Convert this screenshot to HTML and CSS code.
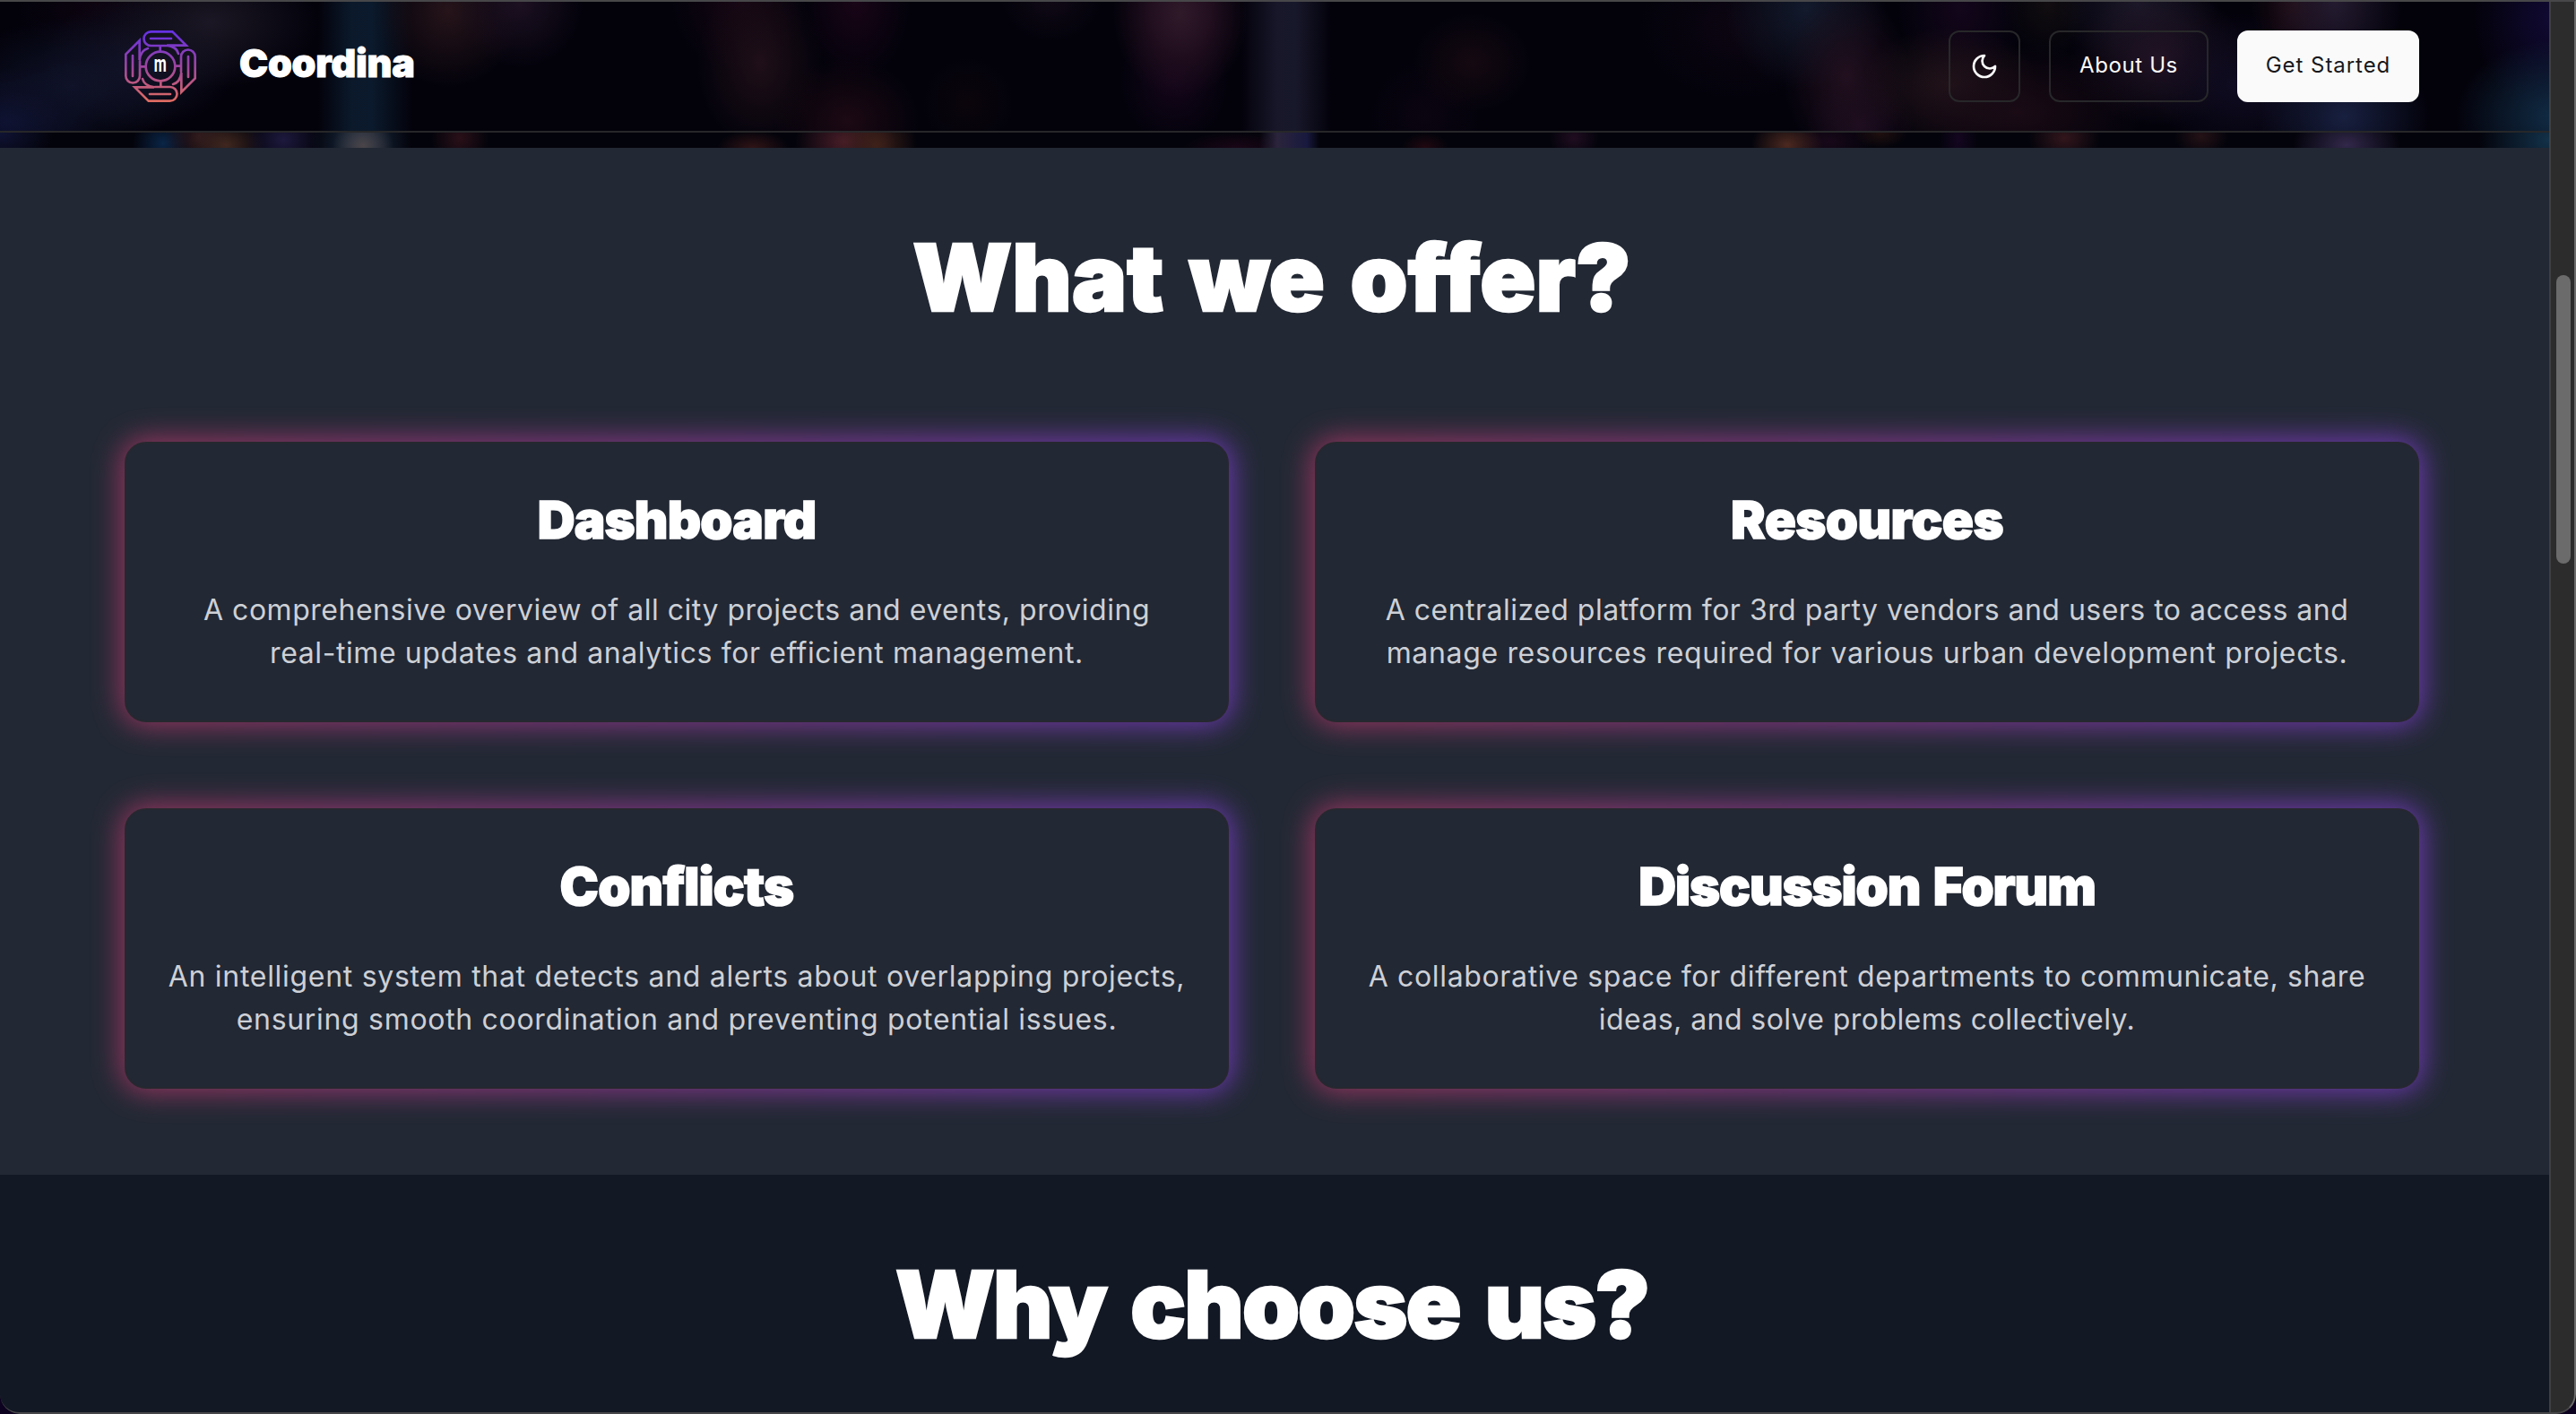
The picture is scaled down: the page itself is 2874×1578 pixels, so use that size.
FILE: index.html
```html
<!DOCTYPE html>
<html lang="en">
<head>
<meta charset="utf-8">
<title>Coordina</title>
<link rel="stylesheet" href="styles.css">
</head>
<body>
<div class="window">
  <div class="page">
    <header class="hero">
      <nav class="nav">
        <a class="brand">
          <svg class="logo" viewBox="0 0 240 240" aria-hidden="true">
            <defs>
              <linearGradient id="ink" x1="0" y1="0" x2="0" y2="1">
                <stop offset="0" stop-color="#6430e6"/>
                <stop offset="0.5" stop-color="#9c459f"/>
                <stop offset="1" stop-color="#e06c60"/>
              </linearGradient>
              <mask id="lines" maskUnits="userSpaceOnUse" x="0" y="0" width="240" height="240">
                <g fill="none" stroke="#fff" stroke-width="8" stroke-linecap="round" stroke-linejoin="miter">
                  <g id="arm">
                    <path d="M119 70V51M138 51H88A23.500 23.500 0 0 1 88 4H160L206 50H141Q174 54 180 78"/>
                    <path d="M87 27H156"/>
                  </g>
                  <use href="#arm" transform="rotate(90 120 120)"/>
                  <use href="#arm" transform="rotate(180 120 120)"/>
                  <use href="#arm" transform="rotate(270 120 120)"/>
                  <circle cx="120" cy="120" r="49"/>
                </g>
              </mask>
            </defs>
            <rect width="240" height="240" fill="url(#ink)" mask="url(#lines)"/>
            <text class="logo-letter" x="98" y="139" textLength="42" lengthAdjust="spacingAndGlyphs">m</text>
          </svg>
          <span class="brand-name">Coordina</span>
        </a>
        <div class="actions">
          <button class="btn btn-icon" aria-label="Toggle theme">
            <svg class="moon" viewBox="0 0 24 24"><path d="M12 3a6 6 0 0 0 9 9 9 9 0 1 1-9-9Z"/></svg>
          </button>
          <button class="btn btn-about">About Us</button>
          <button class="btn btn-start">Get Started</button>
        </div>
      </nav>
      <div class="hero-edge"></div>
    </header>

    <section class="offer">
      <h2 class="heading heading-offer">What we offer?</h2>
      <div class="cards">
        <article class="card">
          <h3 class="card-title">Dashboard</h3>
          <p class="card-text"><span class="line l1">A comprehensive overview of all city projects and events, providing</span> <span class="line l2">real-time updates and analytics for efficient management.</span></p>
        </article>
        <article class="card">
          <h3 class="card-title title-resources">Resources</h3>
          <p class="card-text"><span class="line l3">A centralized platform for 3rd party vendors and users to access and</span> <span class="line l4">manage resources required for various urban development projects.</span></p>
        </article>
        <article class="card">
          <h3 class="card-title">Conflicts</h3>
          <p class="card-text"><span class="line l5">An intelligent system that detects and alerts about overlapping projects,</span> <span class="line l6">ensuring smooth coordination and preventing potential issues.</span></p>
        </article>
        <article class="card">
          <h3 class="card-title title-forum">Discussion Forum</h3>
          <p class="card-text"><span class="line l7">A collaborative space for different departments to communicate, share</span> <span class="line l8">ideas, and solve problems collectively.</span></p>
        </article>
      </div>
    </section>

    <section class="why">
      <h2 class="heading heading-why">Why choose us?</h2>
    </section>
  </div>
  <div class="scrollbar"><div class="thumb"></div></div>
</div>
</body>
</html>
```
FILE: styles.css
```css
* { box-sizing: border-box; }

html, body {
  margin: 0;
  height: 100%;
  overflow: hidden;
  background: #0d0220;
}

body { font-family: Inter, "Liberation Sans", sans-serif; color: #fff; }

.window {
  position: relative;
  display: flex;
  width: 2874px;
  height: 1578px;
  overflow: hidden;
  border-radius: 0 0 22px 22px;
}

/* hairline frame of the window, over the page */
.window::after {
  content: "";
  position: absolute;
  inset: 0;
  border: 2px solid #474749;
  border-left: 0;
  border-right-color: #6c6c6c;
  border-radius: 0 0 22px 22px;
  pointer-events: none;
}

.page {
  flex: none;
  width: 2844px;
  height: 1578px;
  display: flex;
  flex-direction: column;
  overflow: hidden;
}

/* ---------- hero and navigation ---------- */

.hero { flex: none; height: 165px; background: #020109; }

.nav {
  height: 148px;
  padding: 34px 145px 32px 139px;
  display: flex;
  justify-content: space-between;
  align-items: flex-start;
  border-bottom: 2px solid #272729;
  background:
    radial-gradient(110px 85px at 2850px 130px, #112c45, transparent),
    radial-gradient(90px 110px at 2850px 20px, #110a34, transparent),
    radial-gradient(95px 80px at 2615px 130px, #182040, transparent),
    radial-gradient(75px 110px at 2605px 0, #241b30, transparent),
    radial-gradient(50px 70px at 2562px 5px, #220c14, transparent),
    radial-gradient(100px 80px at 2500px 95px, #100c22, transparent),
    radial-gradient(100px 75px at 2410px 65px, #221425, transparent),
    radial-gradient(90px 70px at 2385px 5px, #1b1829, transparent),
    radial-gradient(50px 60px at 2285px 5px, #110d10, transparent),
    radial-gradient(140px 75px at 2250px 125px, #1a0b15, transparent),
    radial-gradient(100px 65px at 2175px 95px, #24151b, transparent),
    radial-gradient(70px 90px at 2188px 10px, #13061b, transparent),
    radial-gradient(70px 95px at 2060px 85px, #22101f, transparent),
    radial-gradient(60px 55px at 2075px 140px, #1c0c1f, transparent),
    radial-gradient(90px 90px at 2015px 10px, #121a2c, transparent),
    radial-gradient(110px 80px at 1940px 30px, #0c0511, transparent),
    radial-gradient(65px 55px at 1642px 70px, #150911, transparent),
    radial-gradient(60px 60px at 1590px 130px, #0b0411, transparent),
    linear-gradient(90deg, transparent 1385px, #18172a 1425px, #18182b 1445px, transparent 1485px),
    radial-gradient(75px 95px at 1317px 15px, #2f1a2a, #210e1e 45%, transparent),
    radial-gradient(60px 70px at 1310px 90px, #14051a, transparent),
    radial-gradient(55px 45px at 1173px 0, #100915, transparent),
    radial-gradient(50px 50px at 1080px 115px, #0b050b, transparent),
    radial-gradient(80px 70px at 945px 135px, #1c0913, transparent),
    radial-gradient(60px 90px at 955px 0, #190517, transparent),
    radial-gradient(70px 95px at 848px 70px, #1f0f18, transparent),
    radial-gradient(75px 80px at 825px 0, #150613, transparent),
    radial-gradient(70px 70px at 580px 5px, #1c1021, transparent),
    radial-gradient(80px 85px at 500px 12px, #26141a, transparent),
    linear-gradient(90deg, transparent 355px, #0b192b 392px, #0b1a2c 415px, transparent 460px),
    radial-gradient(120px 75px at 235px 25px, #1b1724, transparent),
    radial-gradient(110px 75px at 155px 70px, #121327, transparent),
    radial-gradient(130px 75px at 80px 95px, #0f1329, transparent),
    radial-gradient(100px 60px at 10px 135px, #0f1335, transparent),
    radial-gradient(90px 60px at 110px 5px, #0d0410, transparent),
    #03020b;
}

.hero-edge {
  height: 17px;
  background:
    radial-gradient(80px 60px at 2845px 8px, #13324a, transparent),
    radial-gradient(60px 40px at 2618px 14px, #32284a, transparent),
    radial-gradient(30px 24px at 2456px 4px, #241216, transparent),
    radial-gradient(40px 30px at 2303px 6px, #32161c, transparent),
    radial-gradient(22px 40px at 2185px 8px, #140620, transparent),
    radial-gradient(30px 18px at 2098px 0, #20100f, transparent),
    radial-gradient(40px 30px at 1994px 14px, #4c2920, transparent),
    radial-gradient(50px 26px at 2040px 10px, #180819, transparent),
    radial-gradient(28px 24px at 1756px 6px, #200d20, transparent),
    radial-gradient(26px 16px at 1590px 16px, #200810, transparent),
    linear-gradient(90deg, transparent 1405px, #2b243c 1425px, #18193e 1458px, transparent 1472px),
    radial-gradient(60px 18px at 1380px 17px, #1a0616, transparent),
    radial-gradient(45px 44px at 978px 14px, #3e2119, transparent),
    radial-gradient(55px 44px at 942px 10px, #481d28, transparent),
    radial-gradient(40px 20px at 840px 17px, #301416, transparent),
    radial-gradient(32px 34px at 513px 6px, #2a1018, transparent),
    radial-gradient(34px 32px at 405px 15px, #4a4448, transparent),
    radial-gradient(56px 60px at 403px 12px, #1b3046, transparent),
    radial-gradient(42px 36px at 316px 8px, #1d193e, transparent),
    radial-gradient(44px 32px at 252px 14px, #40271f, transparent),
    radial-gradient(38px 34px at 222px 4px, #2c171c, transparent),
    radial-gradient(34px 32px at 182px 12px, #0a2546, transparent),
    radial-gradient(60px 40px at 0 0, #101334, transparent),
    #03030b;
}

.brand { display: flex; align-items: center; gap: 48px; height: 80px; }

.logo { width: 80px; height: 80px; }

.logo-letter { font: 700 78px Roboto, sans-serif; fill: #fff; }

.brand-name {
  font-size: 43px;
  font-weight: 900;
  line-height: 52px;
  letter-spacing: -0.2px;
  padding-bottom: 8px;
  -webkit-text-stroke: 1px #fff;
}

.actions { display: flex; gap: 32px; }

.btn {
  display: flex;
  align-items: center;
  justify-content: center;
  height: 80px;
  padding: 0 0 4px;
  border: 2px solid #272729;
  border-radius: 12px;
  background: transparent;
  color: #fafafa;
  font: 400 24px Inter, "Liberation Sans", sans-serif;
}

.btn-icon { width: 80px; padding: 0; }

.btn-about { width: 178px; letter-spacing: 0.6px; }

.btn-start {
  width: 203px;
  border-color: #fafafa;
  background: #fafafa;
  color: #18181b;
  letter-spacing: 0.95px;
}

.moon {
  width: 32px;
  height: 32px;
  fill: none;
  stroke: #fafafa;
  stroke-width: 2;
  stroke-linecap: round;
  stroke-linejoin: round;
}

/* ---------- sections ---------- */

.offer {
  flex: none;
  height: 1146px;
  padding: 81px 145px 96px 139px;
  background: #222834;
}

.why {
  flex: 1;
  padding: 81px 145px 0 139px;
  background: #121824;
}

.heading {
  margin: 0;
  font-size: 102.5px;
  font-weight: 900;
  line-height: 128px;
  text-align: center;
  -webkit-text-stroke: 2.5px #fff;
}

.heading-offer { letter-spacing: 0.1px; word-spacing: 8px; }
.heading-why { letter-spacing: -1.9px; word-spacing: 9px; }

.cards {
  display: grid;
  grid-template-columns: 1fr 1fr;
  grid-auto-rows: 313px;
  gap: 96px;
  margin-top: 119px;
  isolation: isolate;
}

.card {
  position: relative;
  padding: 53px 0 0;
  border: 2px solid #26282f;
  border-radius: 24px;
  background: #222834;
  text-align: center;
}

/* coloured glow behind each card */
.card::before {
  content: "";
  position: absolute;
  z-index: -1;
  inset: -6px;
  border-radius: 28px;
  background: linear-gradient(90deg, #be3a6b, #8440dc);
  filter: blur(16px);
  opacity: 0.75;
}

.card-title {
  margin: 0;
  font-size: 58px;
  font-weight: 900;
  line-height: 64px;
  letter-spacing: -0.8px;
  -webkit-text-stroke: 1.5px #fff;
}

.title-resources { letter-spacing: -0.55px; }
.title-forum { letter-spacing: -1.1px; word-spacing: 4px; }

.card-text {
  margin: 45px 0 0;
  font-size: 32px;
  font-weight: 400;
  line-height: 48px;
  color: #cdd0d6;
}

.line { display: block; white-space: nowrap; }
.l1 { letter-spacing: 0.52px; }
.l2 { letter-spacing: 0.59px; }
.l3 { letter-spacing: 0.48px; }
.l4 { letter-spacing: 0.66px; }
.l5 { letter-spacing: 0.7px; }
.l6 { letter-spacing: 0.69px; }
.l7 { letter-spacing: 0.65px; }
.l8 { letter-spacing: 0.42px; }

/* ---------- scrollbar ---------- */

.scrollbar {
  flex: none;
  width: 30px;
  padding: 307px 0 0 6px;
  border-left: 2px solid #403f3f;
  background: #2c2c2c;
}

.thumb {
  width: 16px;
  height: 322px;
  border-radius: 8px;
  background: #6b6b6b;
}
```
